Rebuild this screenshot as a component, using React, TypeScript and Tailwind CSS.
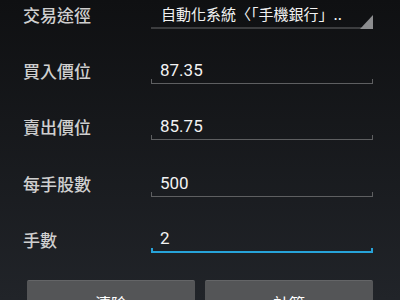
import React from "react";

const cjk = { fontFamily: '"Noto Sans CJK TC", "Noto Sans", sans-serif' };
const num = { fontFamily: 'Roboto, "Noto Sans CJK TC", sans-serif' };

function Field({ value, focused }: { value: string; focused?: boolean }) {
  return (
    <div className="flex-1 flex flex-col">
      <div className="h-[26px] leading-[26px] pl-[9px] text-[17px] text-[#f2f2f2]" style={num}>
        {value}
      </div>
      {focused ? (
        <div className="-mt-[3px] h-[5px] border-x-2 border-b-2 border-[#27a3d9]" />
      ) : (
        <div className="-mt-[4px] h-[5px] border-x border-b border-[#5e5f61]" />
      )}
    </div>
  );
}

function Row({ label, children, className }: { label: string; children: React.ReactNode; className?: string }) {
  return (
    <div className={"h-[56px] flex items-center pl-[23px] pr-[27px] " + (className ?? "")}>
      <div className="w-[128px] text-[17px] font-medium text-[#cfcfcf] leading-none" style={cjk}>
        {label}
      </div>
      {children}
    </div>
  );
}

export default function App() {
  return (
    <div className="w-[400px] h-[300px] overflow-hidden bg-gradient-to-b from-[#0f1012] to-[#212429]">
      <Row label="交易途徑" className="-mt-[14px]">
        <div className="flex-1 flex flex-col pt-[2px]">
          <div className="h-[26px] leading-[26px] pl-[10px] text-[15px] text-[#f2f2f2] whitespace-nowrap overflow-hidden" style={cjk}>
            自動化系統〈「手機銀行」..
          </div>
          <div className="relative h-[2px] bg-[#3c3d3f]">
            <svg className="absolute right-0 bottom-0" width="13" height="14" viewBox="0 0 13 14">
              <polygon points="13,0 13,14 0,14" fill="#8c8d8f" />
            </svg>
          </div>
        </div>
      </Row>
      <Row label="買入價位">
        <Field value="87.35" />
      </Row>
      <Row label="賣出價位">
        <Field value="85.75" />
      </Row>
      <Row label="每手股數" className="mt-[1px]">
        <Field value="500" />
      </Row>
      <Row label="手數">
        <Field value="2" focused />
      </Row>
      <div className="mt-[13px] flex gap-[10px] px-[27px]">
        <button className="flex-1 h-[48px] rounded-[2px] bg-[#545557] border-t border-[#646567] text-white text-[16px] pb-[4px]" style={cjk}>
          清除
        </button>
        <button className="flex-1 h-[48px] rounded-[2px] bg-[#545557] border-t border-[#646567] text-white text-[16px] pb-[4px]" style={cjk}>
          計算
        </button>
      </div>
    </div>
  );
}
